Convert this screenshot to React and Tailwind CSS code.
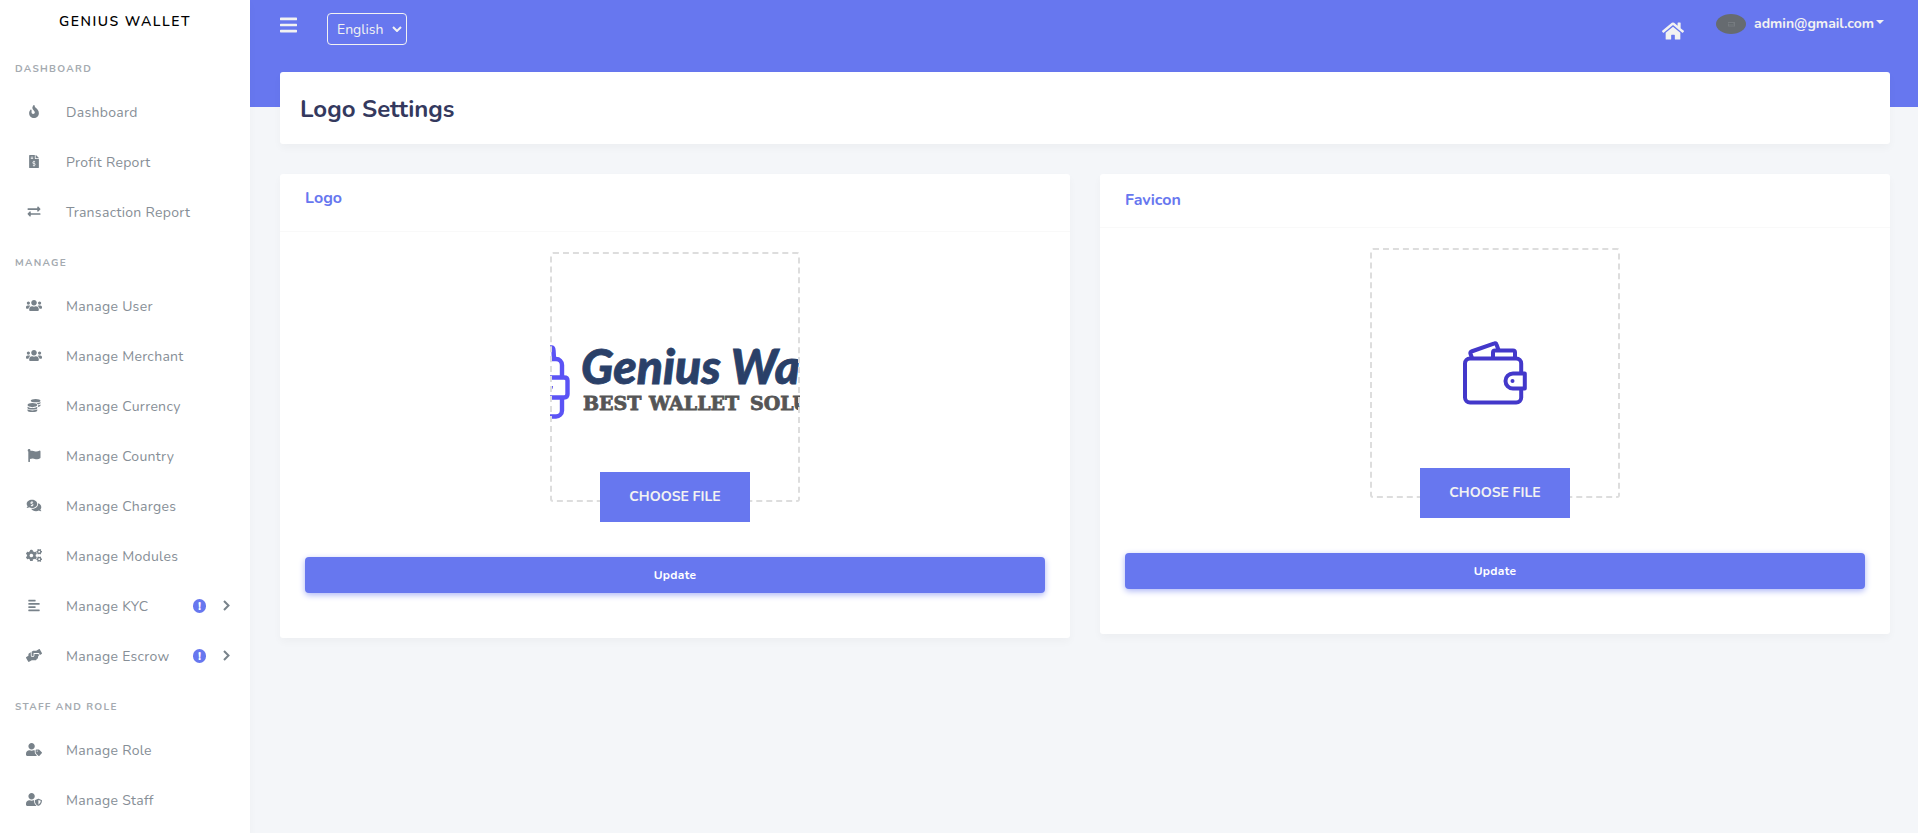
import React from "react";
import {
  FaFire, FaFileInvoiceDollar, FaExchangeAlt, FaUsers, FaCoins, FaFlag,
  FaCommentsDollar, FaCogs, FaAlignLeft, FaHandsHelping, FaUserTag,
  FaUserShield, FaHome, FaBars,
} from "react-icons/fa";

const sections = [
  {
    title: "Dashboard",
    items: [
      { label: "Dashboard", icon: FaFire },
      { label: "Profit Report", icon: FaFileInvoiceDollar },
      { label: "Transaction Report", icon: FaExchangeAlt },
    ],
  },
  {
    title: "Manage",
    items: [
      { label: "Manage User", icon: FaUsers },
      { label: "Manage Merchant", icon: FaUsers },
      { label: "Manage Currency", icon: FaCoins },
      { label: "Manage Country", icon: FaFlag },
      { label: "Manage Charges", icon: FaCommentsDollar },
      { label: "Manage Modules", icon: FaCogs },
      { label: "Manage KYC", icon: FaAlignLeft, alert: true },
      { label: "Manage Escrow", icon: FaHandsHelping, alert: true },
    ],
  },
  {
    title: "Staff and Role",
    items: [
      { label: "Manage Role", icon: FaUserTag },
      { label: "Manage Staff", icon: FaUserShield },
    ],
  },
];

function NavItem({ label, icon: Icon, alert }) {
  return (
    <li>
      <a href="#" className="flex h-[50px] items-center px-5 text-[14px] tracking-[0.3px] text-[#868e96]">
        <span className="mr-[18px] flex w-7 shrink-0 justify-center pb-0.5">
          <Icon className="h-[13px] w-4 text-[#78828a]" />
        </span>
        <span className="flex-1 whitespace-nowrap">{label}</span>
        {alert && (
          <>
            <span className="mr-[17px] flex h-3.5 w-[13px] shrink-0 items-center justify-center rounded-full bg-[#6777ef] text-[12px] font-extrabold leading-none tracking-normal text-white">
              !
            </span>
            <svg viewBox="0 0 7 11" className="mb-0.5 h-[11px] w-[7px] shrink-0 text-[#78828a]">
              <path d="M1 1l4.500 4.500L1 10" fill="none" stroke="currentColor" strokeWidth="2" />
            </svg>
          </>
        )}
      </a>
    </li>
  );
}

function Sidebar() {
  return (
    <aside className="z-10 w-[250px] shrink-0 bg-white shadow-[0_4px_8px_rgba(0,0,0,0.03)]">
      <a href="#" className="flex h-[43px] items-center justify-center text-[14px] font-semibold uppercase tracking-[1.5px] text-black">
        Genius Wallet
      </a>
      <nav>
        {sections.map((s) => (
          <section key={s.title}>
            <h2 className="flex h-11 items-center pl-[15px] pt-2 text-[10px] font-bold uppercase tracking-[1.3px] text-[#a4aab0]">
              {s.title}
            </h2>
            <ul>
              {s.items.map((i) => (
                <NavItem key={i.label} {...i} />
              ))}
            </ul>
          </section>
        ))}
      </nav>
    </aside>
  );
}

function TopBar() {
  return (
    <header className="flex h-[107px] items-start bg-[#6777ef] pl-[30px] pr-[34px] text-[#f2f2f2]">
      <button type="button" aria-label="Toggle sidebar" className="mt-[15px]">
        <FaBars className="h-5 w-[17px]" />
      </button>
      <div className="relative ml-[30px] mt-[13px]">
        <select
          aria-label="Language"
          className="h-8 w-20 appearance-none rounded-[4px] border border-[#f2f2f2] bg-transparent pl-[9px] text-[14px]"
        >
          <option>English</option>
        </select>
        <svg viewBox="0 0 10 6" className="pointer-events-none absolute right-[5px] top-[13px] h-1.5 w-2.5">
          <path d="M1 1l4 4 4-4" fill="none" stroke="currentColor" strokeWidth="2" />
        </svg>
      </div>
      <a href="#" aria-label="Home" className="ml-auto mt-[21px]">
        <FaHome className="h-5 w-[22px]" />
      </a>
      <button type="button" className="ml-8 mt-[13px] flex items-center text-[14px] font-bold">
        <svg viewBox="0 0 30 20" className="mr-2 h-5 w-[30px]">
          <ellipse cx="15" cy="10" rx="15" ry="10" fill="#666b70" />
          <path d="M12 8h7v4.500h-7z" fill="#767b80" />
          <path d="M12.500 9.500h5M13 11h5" stroke="#5c6165" strokeWidth="0.700" />
        </svg>
        admin@gmail.com
        <svg viewBox="0 0 8 4" className="mb-1 ml-0.5 h-1 w-2">
          <path d="M0 0h8L4 4z" fill="currentColor" />
        </svg>
      </button>
    </header>
  );
}

function WalletMark({ color }) {
  return (
    <g fill="none" stroke={color} strokeWidth="4" strokeLinejoin="round">
      <path d="M58.200 31V22.500a5 5 0 0 0-5-5H7a5 5 0 0 0-5 5V56.500a5 5 0 0 0 5 5h46.200a5 5 0 0 0 5-5V48" />
      <path d="M61.800 32.500H50a7.500 7.500 0 0 0 0 15h11.800z" />
      <path d="M9 17l-1.600-4.500a1.500 1.500 0 0 1 1-2L31.500 2.300a1.500 1.500 0 0 1 2 1L35.500 9" />
      <path d="M30 17v-5.500a2 2 0 0 1 2-2h18a2 2 0 0 1 2 2V17" />
      <circle cx="49.500" cy="40" r="2" fill={color} stroke="none" />
    </g>
  );
}

function LogoArt() {
  return (
    <svg viewBox="0 0 250 250" className="block h-full w-full" role="img" aria-label="Genius Wallet logo">
      <g fill="none" stroke="#5b53f5" strokeWidth="4.400" strokeLinejoin="round">
        <path d="M-2 95.500h3.500q1.800 0 2 3L4 107" />
        <path d="M-4 107H6a6 6 0 0 1 6 6v12M-4 164.500H6a6 6 0 0 0 6-6V146" />
        <path d="M-4 125.500H14q3.500 0 3.500 3V142q0 3.500-3.500 3.500H-4" />
        <path d="M-1 137q3 1 3-3" strokeWidth="2" />
      </g>
      <text x="31" y="132" fontFamily="Lato, sans-serif" fontStyle="italic" fontWeight="900" fontSize="48" fill="#2a4068" stroke="#2a4068" strokeWidth="0.800">
        Genius Wallet
      </text>
      <g fontFamily="'DejaVu Serif', serif" fontWeight="700" fontSize="19" fill="#555555" stroke="#555555" strokeWidth="0.800">
        <text x="33" y="158">BEST</text>
        <text x="99" y="158">WALLET</text>
        <text x="200" y="158">SOLUTION</text>
      </g>
    </svg>
  );
}

function FaviconArt() {
  return (
    <svg viewBox="0 0 250 250" className="block h-full w-full" role="img" aria-label="Favicon">
      <g transform="translate(93 93)">
        <WalletMark color="#4338ca" />
      </g>
    </svg>
  );
}

function UploadCard({ title, headerClass, children }) {
  return (
    <section className="min-w-0 flex-1 rounded-[3px] bg-white shadow-[0_4px_8px_rgba(0,0,0,0.03)]">
      <div className={headerClass}>
        <h2 className="text-[16px] font-bold leading-7 text-[#6777ef]">{title}</h2>
      </div>
      <form className="px-[25px] pb-[45px] pt-5" onSubmit={(e) => e.preventDefault()}>
        <div className="relative mx-auto h-[250px] w-[250px]">
          <div className="h-full w-full overflow-hidden">{children}</div>
          <div className="pointer-events-none absolute inset-0 rounded-[3px] border-2 border-dashed border-[#dddddd]" />
          <button
            type="button"
            className="absolute -bottom-5 left-1/2 h-[50px] w-[150px] -translate-x-1/2 bg-[#6777ef] pb-0.5 text-[14px] font-bold uppercase text-[#f2f2f2]"
          >
            Choose File
          </button>
        </div>
        <button
          type="submit"
          className="mt-[55px] block h-9 w-full rounded-[4px] bg-[#6777ef] text-[12px] font-bold tracking-wide text-white shadow-[0_2px_6px_#acb5f6]"
        >
          Update
        </button>
      </form>
    </section>
  );
}

export default function App() {
  return (
    <div className="flex h-screen overflow-hidden bg-[#f4f6f9] font-['Nunito','Open_Sans',sans-serif]">
      <Sidebar />
      <div className="min-w-0 flex-1">
        <TopBar />
        <main className="-mt-[35px] pl-[30px] pr-7">
          <div className="flex h-[72px] items-center rounded-[3px] bg-white px-5 pt-0.5 shadow-[0_4px_8px_rgba(0,0,0,0.03)]">
            <h1 className="text-[24px] font-bold text-[#34395e]">Logo Settings</h1>
          </div>
          <div className="mt-[30px] flex items-start gap-[30px]">
            <UploadCard title="Logo" headerClass="h-[58px] border-b border-[#f9f9f9] px-[25px] pt-2.5">
              <LogoArt />
            </UploadCard>
            <UploadCard title="Favicon" headerClass="h-[54px] border-b border-[#f9f9f9] px-[25px] pt-3">
              <FaviconArt />
            </UploadCard>
          </div>
        </main>
      </div>
    </div>
  );
}
